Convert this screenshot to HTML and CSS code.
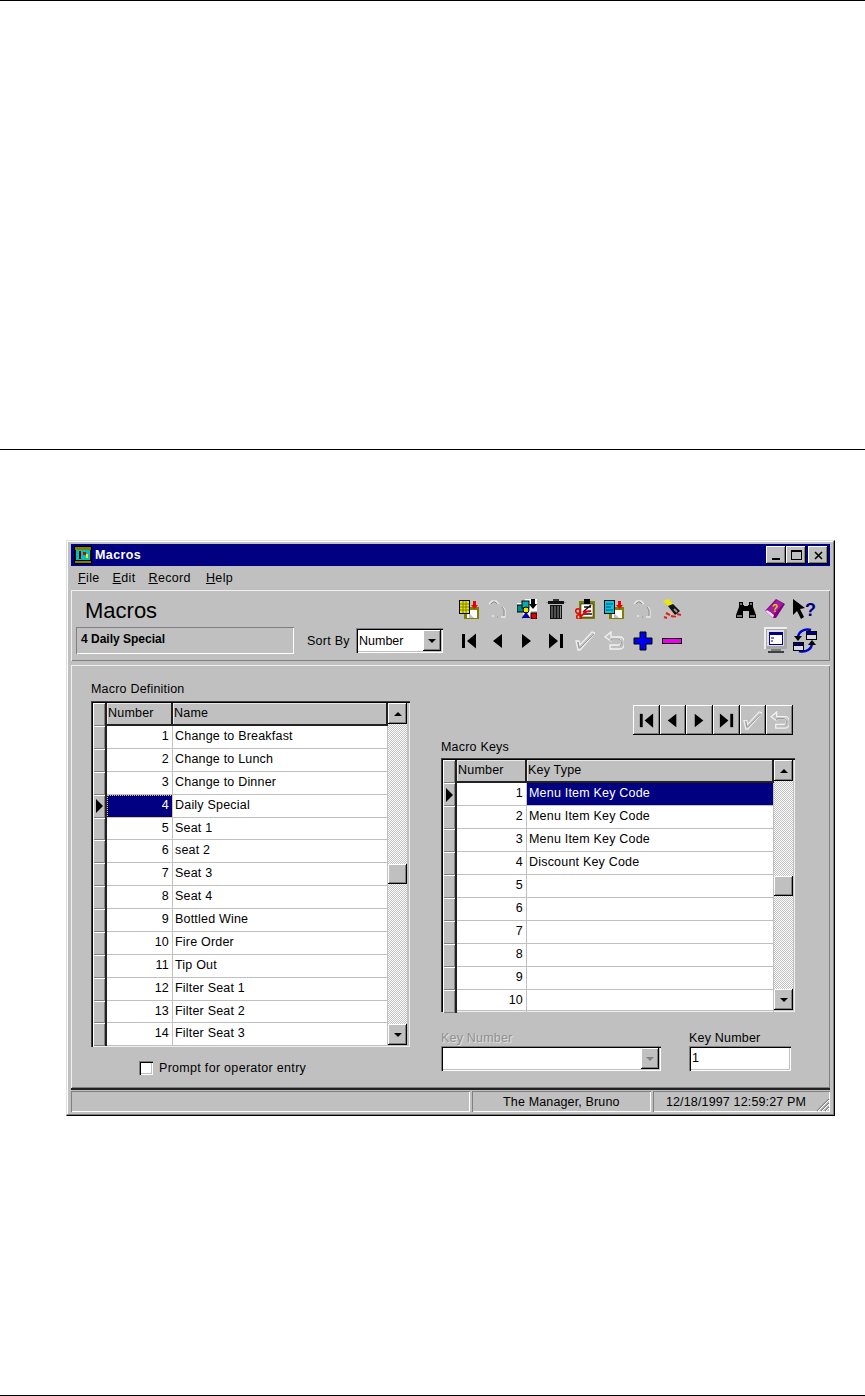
FILE: index.html
```html
<!DOCTYPE html>
<html lang="en">
<head>
<meta charset="utf-8">
<title>Macros</title>
<link rel="stylesheet" href="styles.css">
</head>
<body>
<div class="page">
  <section class="blank-top"></section>
  <main class="figure">
    <div class="window">
      <header class="titlebar">
        <svg class="app-icon" viewBox="0 0 18 18" width="18" height="18"><rect width="18" height="18" fill="#000"/><rect x="1" y="1" width="16" height="3" fill="#808000"/><rect x="2" y="4" width="14" height="10" fill="#00c0c0"/><rect x="5" y="5" width="2" height="8" fill="#000"/><rect x="9" y="6" width="3" height="3" fill="#d00"/><rect x="12" y="8" width="2" height="4" fill="#ee0"/><rect x="1" y="15" width="16" height="2" fill="#808000"/></svg>
        <span class="title-text">Macros</span>
        <div class="win-buttons">
          <button class="win-btn"><span class="min-glyph"></span></button>
          <button class="win-btn"><span class="max-glyph"></span></button>
          <button class="win-btn win-close"><svg viewBox="0 0 9 9" width="9" height="9"><path d="M1 1l7 7M8 1l-7 7" stroke="#000" stroke-width="1.6"/></svg></button>
        </div>
      </header>
      <nav class="menubar">
        <span class="menu-item"><u>F</u>ile</span>
        <span class="menu-item"><u>E</u>dit</span>
        <span class="menu-item"><u>R</u>ecord</span>
        <span class="menu-item"><u>H</u>elp</span>
      </nav>
      <section class="toolbar">
        <h1 class="heading">Macros</h1>
        <div class="tools tools-top">
          <svg class="ic" viewBox="0 0 20 20"><rect x="5" y="8" width="15" height="12" fill="#808000"/><rect x="8" y="11" width="10" height="8" fill="#fff"/><path d="M10 14l5 5h-5z" fill="#c0c0c0"/><rect x="0" y="1" width="11" height="14" fill="#000"/><rect x="1" y="2" width="9" height="12" fill="#e8e800"/><path d="M1 5h9M1 8h9M1 11h9M4 2v12M7 2v12" stroke="#808000"/><rect x="14" y="2" width="3" height="4" fill="#e00"/><path d="M12 6h7l-3.500 4z" fill="#e00"/></svg>
          <svg class="ic" viewBox="0 0 20 20"><path d="M1 5l3-3h4l3 3M15 8l2 3v7h-4M4 17h2" fill="none" stroke="#e8e8e8" stroke-width="1.300"/><path d="M3 5l2-2h2l2 2M14 8l2 3v6M9 18h1" fill="none" stroke="#8a8a8a"/></svg>
          <svg class="ic" viewBox="0 0 20 20"><rect x="0" y="0" width="20" height="20" fill="#fff"/><path d="M0 0h8v4h-8zM0 10h6v10h-6zM14 12h6v2h-6z" fill="#c0c0c0"/><rect x="0" y="6" width="7" height="7" fill="#008a8a" stroke="#000"/><rect x="5" y="2" width="7" height="7" fill="#00b0b0" stroke="#000"/><path d="M14 0h4v5h2l-4 5-4-5h2z" fill="#000"/><circle cx="9" cy="11" r="3" fill="#e8e800" stroke="#000"/><path d="M9 13l4 6h-8z" fill="#0000d0" stroke="#000" stroke-width=".5"/><rect x="14" y="14" width="6" height="6" fill="#e00000" stroke="#000"/></svg>
          <svg class="ic" viewBox="0 0 20 20"><rect x="7" y="0" width="6" height="2" fill="#333"/><rect x="2" y="2" width="16" height="3" fill="#111"/><rect x="0" y="3" width="2" height="1" fill="#999"/><rect x="18" y="3" width="2" height="1" fill="#999"/><rect x="4" y="6" width="12" height="14" fill="#111"/><path d="M6 7v12M9 7v12M12 7v12M14.500 7v12" stroke="#909090"/></svg>
          <svg class="ic" viewBox="0 0 20 20"><rect x="4" y="2" width="16" height="18" fill="#808000"/><rect x="6" y="5" width="12" height="13" fill="#fff" stroke="#000" stroke-width=".5"/><rect x="9" y="0" width="6" height="5" fill="#000"/><path d="M8 13l8-7M9 8h7M9 15h8" stroke="#111" stroke-width="1.400"/><path d="M8 13l8-1" stroke="#e00" stroke-width="2"/><circle cx="3" cy="12" r="2.300" fill="none" stroke="#e00" stroke-width="1.500"/><circle cx="4" cy="18" r="2.300" fill="none" stroke="#e00" stroke-width="1.500"/><path d="M6 17l5-4" stroke="#e00" stroke-width="2"/></svg>
          <svg class="ic" viewBox="0 0 20 20"><rect x="5" y="8" width="15" height="12" fill="#808000"/><rect x="8" y="11" width="10" height="8" fill="#fff"/><path d="M10 14l5 5h-5z" fill="#c0c0c0"/><rect x="0" y="1" width="11" height="14" fill="#000"/><rect x="1" y="2" width="9" height="12" fill="#00c8e0"/><path d="M2 5h7M2 8h5M2 11h7" stroke="#004080"/><rect x="14" y="2" width="3" height="4" fill="#e00"/><path d="M12 6h7l-3.500 4z" fill="#e00"/></svg>
          <svg class="ic" viewBox="0 0 20 20"><path d="M1 5l3-3h4l3 3M15 8l2 3v7h-4M4 17h2" fill="none" stroke="#e8e8e8" stroke-width="1.300"/><path d="M3 5l2-2h2l2 2M14 8l2 3v6M9 18h1" fill="none" stroke="#8a8a8a"/></svg>
          <svg class="ic" viewBox="0 0 20 20"><path d="M1 2l6-2 4 5-5 2z" fill="#e8e800"/><path d="M6 7l5-2 7 7-5 4z" fill="#111"/><path d="M12 10l3 3" stroke="#999" stroke-width="2"/><path d="M4 14l4 2M9 17l5 1M15 15l4 1M2 18l3 1" stroke="#e02020" stroke-width="2"/><path d="M7 13l3 2M12 19l3 1" stroke="#f0c0a0" stroke-width="1.500"/></svg>
          <svg class="ic ic-find" viewBox="0 0 20 20"><path d="M3 3h4v3h1v1h4v-1h1v-3h4v5l3 8v3h-7v-7h-6v7h-7v-3l3-8z" fill="#000"/><path d="M1 17h5M14 17h5M4 5h2M14 5h2" stroke="#e8e8e8"/></svg>
          <svg class="ic ic-book" viewBox="0 0 20 20"><path d="M0 12l11-12 9 5-9 14h-3z" fill="#800080"/><path d="M0 12l8 7 1-3-6-5z" fill="#f0d8f0"/><path d="M2 11l10-10 6 4-9 10z" fill="#a020a0"/><text x="7" y="13" class="svg-q svg-q-y">?</text></svg>
          <svg class="ic ic-help" viewBox="0 0 24 20"><path d="M0 0l12 9-5 1 4 8-3 2-4-8-4 4z" fill="#000"/><text x="12" y="17" class="svg-q svg-q-b">?</text></svg>
        </div>
        <div class="readout">4 Daily Special</div>
        <div class="sort">
          <span class="sort-label">Sort By</span>
          <div class="combo combo-sort">
            <span class="combo-value">Number</span>
            <span class="arrow-btn"><span class="tri-down"></span></span>
          </div>
        </div>
        <div class="tools tools-bottom">
          <svg class="ic" viewBox="0 0 20 20"><use href="#g-first"/></svg>
          <svg class="ic" viewBox="0 0 20 20"><use href="#g-prev"/></svg>
          <svg class="ic" viewBox="0 0 20 20"><use href="#g-next"/></svg>
          <svg class="ic" viewBox="0 0 20 20"><use href="#g-last"/></svg>
          <svg class="ic" viewBox="0 0 20 20"><use href="#g-check"/></svg>
          <svg class="ic" viewBox="0 0 20 20"><use href="#g-undo"/></svg>
          <svg class="ic" viewBox="0 0 20 20"><path d="M7 1h6v6h6v6h-6v6h-6v-6h-6v-6h6z" fill="#0000f0" stroke="#000"/></svg>
          <svg class="ic" viewBox="0 0 20 20"><rect x="0.500" y="7.500" width="19" height="5" fill="#f000f0" stroke="#000"/></svg>
          <svg class="ic-lg ic-mon" viewBox="0 0 24 27"><rect x="0" y="0" width="23" height="22" fill="#efefef"/><rect x="2" y="2" width="21" height="20" fill="#a8a8a8"/><rect x="3" y="3" width="17" height="16" fill="#e0e0e0"/><rect x="5" y="5" width="14" height="13" fill="#000080"/><rect x="6" y="8" width="12" height="9" fill="#fff"/><path d="M7 11h3M7 14h2" stroke="#000080"/><rect x="7" y="22" width="10" height="2" fill="#808080"/><rect x="4" y="24" width="16" height="2" fill="#404040"/></svg>
          <svg class="ic-lg ic-sync" viewBox="0 0 24 27"><path d="M5 11c0-6 6-10 13-8" fill="none" stroke="#0000d0" stroke-width="2.500"/><path d="M19 16c0 6-6 10-13 8" fill="none" stroke="#0000d0" stroke-width="2.500"/><path d="M1 9h8l-4 5z" fill="#000"/><path d="M15 18h8l-4-5z" fill="#000"/><rect x="13" y="4" width="11" height="9" fill="#000"/><rect x="14" y="5" width="9" height="2" fill="#000080"/><rect x="14" y="8" width="9" height="4" fill="#d8d8e8"/><rect x="0" y="15" width="11" height="9" fill="#000"/><rect x="1" y="16" width="9" height="2" fill="#000080"/><rect x="1" y="19" width="9" height="4" fill="#d8d8e8"/></svg>
        </div>
      </section>
      <section class="form">
        <div class="col-left">
          <div class="label label-def">Macro Definition</div>
          <div class="grid grid-left">
            <div class="grid-body">
              <div class="row row-head"><span class="ind"></span><span class="cell num head">Number</span><span class="cell nm head">Name</span></div>
              <div class="row"><span class="ind"></span><span class="cell num">1</span><span class="cell nm">Change to Breakfast</span></div>
              <div class="row"><span class="ind"></span><span class="cell num">2</span><span class="cell nm">Change to Lunch</span></div>
              <div class="row"><span class="ind"></span><span class="cell num">3</span><span class="cell nm">Change to Dinner</span></div>
              <div class="row"><span class="ind"><span class="tri-right"></span></span><span class="cell num sel sel-dot">4</span><span class="cell nm">Daily Special</span></div>
              <div class="row"><span class="ind"></span><span class="cell num">5</span><span class="cell nm">Seat 1</span></div>
              <div class="row"><span class="ind"></span><span class="cell num">6</span><span class="cell nm">seat 2</span></div>
              <div class="row"><span class="ind"></span><span class="cell num">7</span><span class="cell nm">Seat 3</span></div>
              <div class="row"><span class="ind"></span><span class="cell num">8</span><span class="cell nm">Seat 4</span></div>
              <div class="row"><span class="ind"></span><span class="cell num">9</span><span class="cell nm">Bottled Wine</span></div>
              <div class="row"><span class="ind"></span><span class="cell num">10</span><span class="cell nm">Fire Order</span></div>
              <div class="row"><span class="ind"></span><span class="cell num">11</span><span class="cell nm">Tip Out</span></div>
              <div class="row"><span class="ind"></span><span class="cell num">12</span><span class="cell nm">Filter Seat 1</span></div>
              <div class="row"><span class="ind"></span><span class="cell num">13</span><span class="cell nm">Filter Seat 2</span></div>
              <div class="row"><span class="ind"></span><span class="cell num">14</span><span class="cell nm">Filter Seat 3</span></div>
            </div>
            <div class="scroll">
              <span class="arrow-btn scroll-btn"><span class="tri-up"></span></span>
              <div class="track track-left"><span class="thumb"></span></div>
              <span class="arrow-btn scroll-btn"><span class="tri-down"></span></span>
            </div>
          </div>
          <label class="check-row"><span class="checkbox"></span><span class="check-text">Prompt for operator entry</span></label>
        </div>
        <div class="col-right">
          <div class="navbar">
            <span class="nav-btn"><svg class="ic" viewBox="0 0 20 20"><use href="#g-first"/></svg></span>
            <span class="nav-btn"><svg class="ic" viewBox="0 0 20 20"><use href="#g-prev"/></svg></span>
            <span class="nav-btn"><svg class="ic" viewBox="0 0 20 20"><use href="#g-next"/></svg></span>
            <span class="nav-btn"><svg class="ic" viewBox="0 0 20 20"><use href="#g-last"/></svg></span>
            <span class="nav-btn"><svg class="ic" viewBox="0 0 20 20"><use href="#g-check"/></svg></span>
            <span class="nav-btn"><svg class="ic" viewBox="0 0 20 20"><use href="#g-undo"/></svg></span>
          </div>
          <div class="label label-keys">Macro Keys</div>
          <div class="grid grid-right">
            <div class="grid-body">
              <div class="row row-head"><span class="ind"></span><span class="cell num head">Number</span><span class="cell nm head">Key Type</span></div>
              <div class="row"><span class="ind"><span class="tri-right"></span></span><span class="cell num">1</span><span class="cell nm sel">Menu Item Key Code</span></div>
              <div class="row"><span class="ind"></span><span class="cell num">2</span><span class="cell nm">Menu Item Key Code</span></div>
              <div class="row"><span class="ind"></span><span class="cell num">3</span><span class="cell nm">Menu Item Key Code</span></div>
              <div class="row"><span class="ind"></span><span class="cell num">4</span><span class="cell nm">Discount Key Code</span></div>
              <div class="row"><span class="ind"></span><span class="cell num">5</span><span class="cell nm"></span></div>
              <div class="row"><span class="ind"></span><span class="cell num">6</span><span class="cell nm"></span></div>
              <div class="row"><span class="ind"></span><span class="cell num">7</span><span class="cell nm"></span></div>
              <div class="row"><span class="ind"></span><span class="cell num">8</span><span class="cell nm"></span></div>
              <div class="row"><span class="ind"></span><span class="cell num">9</span><span class="cell nm"></span></div>
              <div class="row"><span class="ind"></span><span class="cell num">10</span><span class="cell nm"></span></div>
            </div>
            <div class="scroll">
              <span class="arrow-btn scroll-btn"><span class="tri-up"></span></span>
              <div class="track track-right"><span class="thumb"></span></div>
              <span class="arrow-btn scroll-btn"><span class="tri-down"></span></span>
            </div>
          </div>
          <div class="fields">
            <div class="field field-combo">
              <div class="label label-off">Key Number</div>
              <div class="combo combo-key"><span class="combo-value"></span><span class="arrow-btn"><span class="tri-down tri-off"></span></span></div>
            </div>
            <div class="field field-text">
              <div class="label">Key Number</div>
              <div class="textbox">1</div>
            </div>
          </div>
        </div>
      </section>
      <footer class="status">
        <span class="pane pane-a"></span>
        <span class="pane pane-b">The Manager, Bruno</span>
        <span class="pane pane-c">12/18/1997 12:59:27 PM</span>
        <svg class="grip" viewBox="0 0 16 16" width="16" height="16"><path d="M15 3L3 15M15 7L7 15M15 11L11 15" stroke="#808080" stroke-width="1.200"/><path d="M15 4L4 15M15 8L8 15M15 12L12 15" stroke="#fff"/></svg>
      </footer>
    </div>
  </main>
  <svg class="defs" width="0" height="0">
    <defs>
      <g id="g-first"><rect x="3" y="3" width="3" height="14" fill="#000"/><path d="M17 2.500v15l-9-7.500z" fill="#000"/></g>
      <g id="g-prev"><path d="M14 3v14l-9-7z" fill="#000"/></g>
      <g id="g-next"><path d="M5 3v14l9-7z" fill="#000"/></g>
      <g id="g-last"><rect x="14" y="3" width="3" height="14" fill="#000"/><path d="M3 2.500v15l9-7.500z" fill="#000"/></g>
      <g id="g-check"><path d="M1 10h3l1 4L17 1l3 1L5 19H3z" fill="none" stroke="#efefef" stroke-width="1.300"/><path d="M5 17L19 3M3 11l1 6" fill="none" stroke="#969696"/></g>
      <g id="g-undo"><path d="M7 1L1 6l6 4V8h8c3 0 3 6 0 6H6v4h10c6 0 6-12 0-12H7z" fill="none" stroke="#f2f2f2" stroke-width="1.300"/><path d="M7 10v-2h8c3 1 3 5 1 7" fill="none" stroke="#8c8c8c"/></g>
    </defs>
  </svg>
</div>
</body>
</html>
```
FILE: styles.css
```css
* { box-sizing: border-box; }
html, body { margin: 0; padding: 0; background: #fff; }
body { font-family: "Liberation Sans", Arial, sans-serif; font-size: 12px; color: #000; }

.page { position: relative; width: 865px; height: 1396px; border-top: 1px solid #000; border-bottom: 1px solid #000; }
.blank-top { height: 449px; border-bottom: 1px solid #000; }
.figure { padding: 90px 30px 0 66px; }
.defs { position: absolute; }

.window {
  width: 769px; height: 576px; padding: 3px 4px 3px 4px; background: #c0c0c0;
  border: 1px solid; border-color: #e0e0e0 #000 #000 #e0e0e0;
  box-shadow: inset -1px -1px 0 #808080, inset 1px 1px 0 #fff;
  display: flex; flex-direction: column;
}

.titlebar { height: 22px; background: #000080; display: flex; align-items: center; padding: 0 2px 0 3px; flex: none; }
.app-icon { flex: none; }
.title-text { color: #fff; font-weight: 700; font-size: 12.500px; margin-left: 3px; letter-spacing: .4px; }
.win-buttons { margin-left: auto; display: flex; }
.win-btn {
  width: 20px; height: 18px; padding: 0; margin: 0; background: #c0c0c0; border: 0; display: flex; align-items: center; justify-content: center;
  box-shadow: inset -1px -1px 0 #000, inset 1px 1px 0 #fff, inset -2px -2px 0 #808080;
}
.win-close { margin-left: 2px; }
.min-glyph { width: 8px; height: 2px; background: #000; margin-top: 8px; }
.max-glyph { width: 11px; height: 10px; border: 1px solid #000; border-top-width: 2px; }

.menubar { height: 23px; display: flex; align-items: center; padding-left: 7px; flex: none; }
.menu-item { font-size: 12.500px; letter-spacing: .35px; margin-right: 13px; }
.menu-item:nth-child(3) { margin-right: 15px; }
.menu-item u { text-underline-offset: 1px; }

.toolbar {
  height: 71px; margin-top: 1px; padding: 9px 0 0 5px; flex: none; display: grid;
  grid-template-columns: 219px 164px 1fr; grid-template-rows: 28px 27px;
  box-shadow: inset 1px 1px 0 #f0f0f0, inset -1px -1px 0 #808080;
}
.heading { grid-column: 1 / 3; margin: 0 0 0 9px; font-size: 22px; font-weight: 400; line-height: 23px; }
.tools { display: grid; justify-items: start; }
.tools-top { grid-template-columns: repeat(8, 29px) 45px 29px 28px 29px; }
.tools-bottom { grid-template-columns: repeat(8, 29px) 73px 29px 29px; align-items: center; }
.tools-top .ic-find { grid-column: 10; }
.tools-top .ic-book { grid-column: 11; }
.tools-top .ic-help { grid-column: 12; width: 24px; }
.tools-bottom .ic-mon { grid-column: 10; }
.tools-bottom .ic-sync { grid-column: 11; }
.ic { width: 20px; height: 20px; display: block; }
.ic-lg { width: 24px; height: 27px; display: block; }
.svg-q { font-family: "Liberation Sans", Arial, sans-serif; font-weight: 700; }
.svg-q-y { fill: #f0d000; font-size: 10px; }
.svg-q-b { fill: #000080; font-size: 18px; }

.readout {
  height: 27px; width: 218px; padding: 0 5px; font-weight: 700; font-size: 12px; line-height: 25px;
  box-shadow: inset 1px 1px 0 #808080, inset -1px -1px 0 #fff;
}
.sort { display: flex; align-items: center; padding-left: 12px; }
.sort-label { width: 49px; font-size: 12.500px; letter-spacing: .25px; flex: none; }

.combo {
  background: #fff; display: flex; align-items: center; justify-content: space-between; padding: 2px;
  box-shadow: inset 1px 1px 0 #808080, inset 2px 2px 0 #000, inset -1px -1px 0 #fff, inset -2px -2px 0 #c0c0c0;
}
.combo-sort { width: 87px; height: 25px; }
.combo-key { width: 220px; height: 25px; }
.combo-value { font-size: 12.500px; padding-left: 1px; }
.arrow-btn {
  width: 18px; height: 21px; background: #c0c0c0; display: flex; align-items: center; justify-content: center; flex: none;
  box-shadow: inset -1px -1px 0 #000, inset 1px 1px 0 #fff, inset -2px -2px 0 #808080;
}
.tri-down { width: 0; height: 0; border: 4px solid transparent; border-top: 4px solid #000; border-bottom: 0; }
.tri-up { width: 0; height: 0; border: 4px solid transparent; border-bottom: 4px solid #000; border-top: 0; }
.tri-off { border-top-color: #808080; }
.tri-right { display: block; width: 0; height: 0; border: 7px solid transparent; border-left: 7px solid #000; border-right: 0; margin-left: 3px; }

.form {
  margin-top: 4px; height: 423px; padding: 15px 0 0 20px; flex: none; display: flex;
  box-shadow: inset 1px 1px 0 #f0f0f0, inset -1px -1px 0 #808080, 0 2px 0 #222;
}
.col-left { width: 350px; flex: none; }
.col-right { width: 355px; flex: none; padding-top: 25px; }

.label { font-size: 12.500px; letter-spacing: .2px; line-height: 16px; }
.label-def { height: 21px; padding-top: 1px; }
.label-keys { margin-top: 4px; height: 19px; line-height: 14px; padding-top: 1px; }
.label-off { color: #909090; text-shadow: 1px 1px 0 #e0e0e0; }

.grid {
  display: flex; padding: 2px 2px 2px 2px; background: #c0c0c0;
  box-shadow: inset 1px 1px 0 #404040, inset 2px 2px 0 #000, inset -1px -1px 0 #f0f0f0;
}
.grid-left { width: 319px; height: 346px; padding-right: 3px; }
.grid-right { width: 354px; height: 254px; }
.grid-body { flex: 1; min-width: 0; background: #fff; display: grid; grid-auto-rows: 23px; }
.grid-left .grid-body { grid-template-rows: 23.200px; grid-auto-rows: 22.860px; }

.row { display: flex; font-size: 12.500px; letter-spacing: .2px; line-height: 21px; }
.row-head { background: #c0c0c0; }
.ind {
  width: 14px; background: #c0c0c0; flex: none; display: flex; align-items: center; border-right: 2px solid #222;
  box-shadow: inset 1px 1px 0 #fff, inset -1px -1px 0 #808080;
}
.cell { border-right: 1px solid #c0c0c0; border-bottom: 1px solid #c0c0c0; padding: 0 3px 0 2px; overflow: hidden; white-space: nowrap; }
.num { width: 66px; text-align: right; flex: none; }
.nm { flex: 1; }
.grid-right .num { width: 70px; }
.head { text-align: left; padding-left: 1px; background: #c0c0c0; border-right: 2px solid #222; border-bottom: 2px solid #222; box-shadow: inset 1px 1px 0 #e8e8e8; }
.sel { background: #000080; color: #fff; }
.sel-dot { outline: 1px dotted #e8d060; outline-offset: -1px; }

.scroll { width: 19px; flex: none; display: flex; flex-direction: column; }
.scroll-btn { width: 19px; height: 21px; }
.track {
  flex: 1; background-color: #fff;
  background-image: repeating-conic-gradient(#c0c0c0 0 25%, #fff 0 50%); background-size: 2px 2px;
}
.track-left { padding-top: 140px; }
.track-right { padding-top: 95px; }
.thumb {
  display: block; width: 19px; height: 20px; background: #c0c0c0;
  box-shadow: inset -1px -1px 0 #000, inset 1px 1px 0 #fff, inset -2px -2px 0 #808080;
}

.check-row { display: flex; align-items: center; margin: 11px 0 0 48px; height: 20px; }
.checkbox {
  width: 14px; height: 14px; background: #fff; flex: none;
  box-shadow: inset 1px 1px 0 #808080, inset 2px 2px 0 #000, inset -1px -1px 0 #fff, inset -2px -2px 0 #c0c0c0;
}
.check-text { font-size: 12.500px; letter-spacing: .3px; margin-left: 6px; }

.navbar { display: grid; grid-template-columns: repeat(6, 1fr); width: 160px; margin-left: 192px; }
.nav-btn {
  height: 30px; background: #c0c0c0; display: flex; align-items: center; justify-content: center;
  box-shadow: inset -1px -1px 0 #000, inset 1px 1px 0 #fff, inset -2px -2px 0 #808080;
}
.nav-btn .ic { width: 19px; height: 19px; }

.fields { display: flex; margin-top: 18px; }
.field-combo { width: 248px; }
.field-text { width: 102px; }
.textbox {
  width: 102px; height: 25px; background: #fff; padding: 0 3px; font-size: 12.500px; line-height: 25px;
  box-shadow: inset 1px 1px 0 #808080, inset 2px 2px 0 #000, inset -1px -1px 0 #fff, inset -2px -2px 0 #c0c0c0;
}

.status { flex: 1; display: flex; align-items: stretch; margin-top: 3px; position: relative; font-size: 12.500px; letter-spacing: .15px; }
.pane { box-shadow: inset 1px 1px 0 #808080, inset -1px -1px 0 #fff; display: flex; align-items: center; justify-content: center; margin-right: 2px; }
.pane-a { width: 401px; }
.pane-b { width: 180px; }
.pane-c { width: 178px; margin-right: 0; justify-content: flex-start; padding-left: 13px; }
.grip { position: absolute; right: 0; bottom: 0; }
```
